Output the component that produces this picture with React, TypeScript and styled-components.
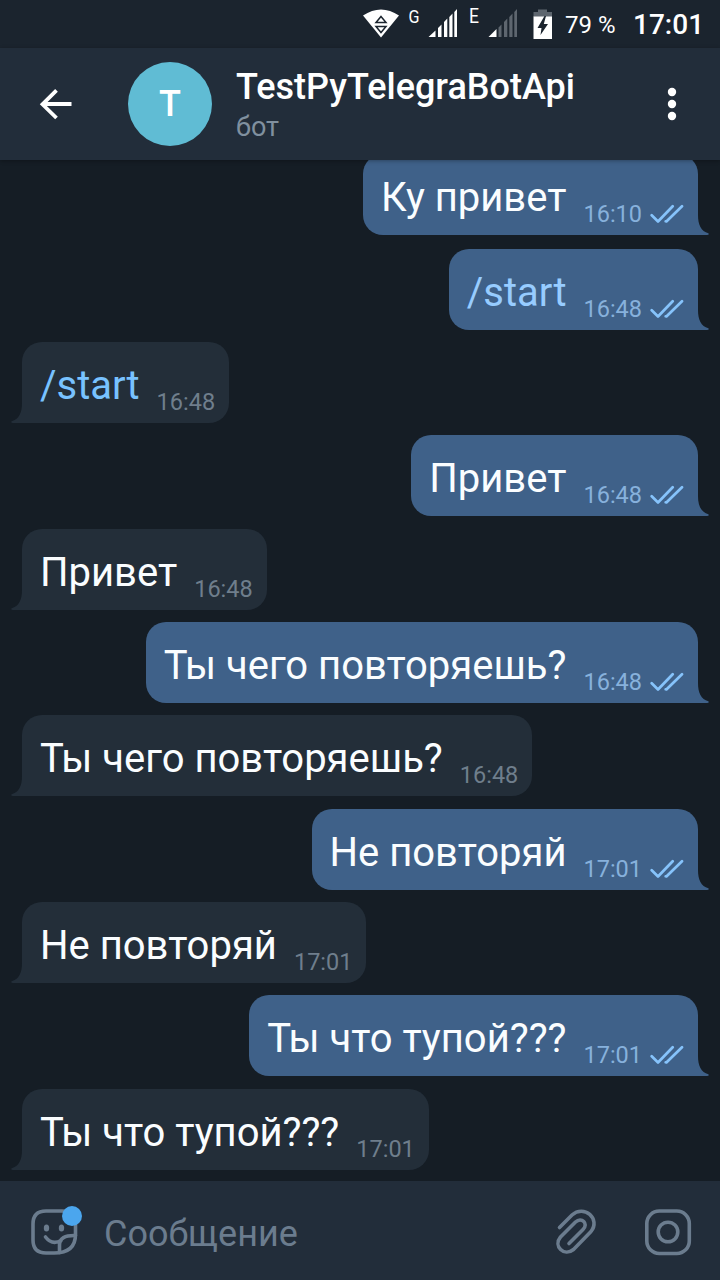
import React from "react";
import styled, { createGlobalStyle } from "styled-components";

const colors = {
  status: "#1b242e",
  panel: "#222d3a",
  chat: "#151d25",
  incoming: "#232e39",
  outgoing: "#3f6189",
  icon: "#6b7c8e",
};

const GlobalStyle = createGlobalStyle`
  * {
    box-sizing: border-box;
  }
  body {
    margin: 0;
    background-color: ${colors.chat};
    font-family: Roboto, "Noto Sans", sans-serif;
  }
`;

const Screen = styled.div`
  display: flex;
  flex-direction: column;
  width: 720px;
  height: 1280px;
  overflow: hidden;
  background-color: ${colors.chat};
`;

const StatusBar = styled.div`
  display: flex;
  flex: none;
  align-items: center;
  justify-content: flex-end;
  height: 48px;
  padding-right: 17px;
  color: #ffffff;
  background-color: ${colors.status};
`;

const StatusIcons = styled.svg`
  flex: none;
  width: 192px;
  height: 48px;
  margin-right: 12px;
`;

const Battery = styled.span`
  width: 50px;
  margin-right: 18px;
  padding-top: 2px;
  font-size: 24px;
  line-height: 48px;
  white-space: nowrap;
`;

const Clock = styled.span`
  width: 70px;
  padding-top: 2px;
  font-size: 28px;
  font-weight: 500;
  line-height: 48px;
  white-space: nowrap;
`;

const Header = styled.header`
  position: relative;
  z-index: 1;
  display: flex;
  flex: none;
  align-items: center;
  height: 112px;
  padding: 0 32px 0 36px;
  background-color: ${colors.panel};
  box-shadow: 0 1px 4px rgba(0, 0, 0, 0.3);
`;

const IconButton = styled.button`
  display: flex;
  flex: none;
  padding: 0;
  border: 0;
  background: none;
`;

const Avatar = styled.div`
  flex: none;
  width: 84px;
  height: 84px;
  margin: 0 24px 0 52px;
  border-radius: 50%;
  color: #ffffff;
  background-color: #60bcd4;
  font-size: 36px;
  font-weight: 500;
  line-height: 84px;
  text-align: center;
`;

const Title = styled.div`
  flex: 1;
  padding-top: 3px;
`;

const Name = styled.div`
  color: #ffffff;
  font-size: 36px;
  font-weight: 500;
  line-height: 42px;
  white-space: nowrap;
`;

const Subtitle = styled.div`
  color: #80909f;
  font-size: 27px;
  line-height: 38px;
`;

const Chat = styled.main`
  display: flex;
  flex: 1;
  flex-direction: column;
  align-items: flex-start;
  justify-content: flex-end;
  gap: 12.33px;
  min-height: 0;
  padding: 0 22px 11.3px;
  overflow: hidden;
`;

const Bubble = styled.div<{ $out?: boolean; $last?: boolean }>`
  position: relative;
  display: flex;
  flex: none;
  align-items: flex-end;
  align-self: ${({ $out }) => ($out ? "flex-end" : "flex-start")};
  height: 81px;
  margin-bottom: ${({ $last }) => ($last ? "1.4px" : "0")};
  padding: 0 14px 0 18px;
  border-radius: ${({ $out }) => ($out ? "20px 20px 0 20px" : "20px 20px 20px 0")};
  background-color: ${({ $out }) => ($out ? colors.outgoing : colors.incoming)};
`;

const Tail = styled.svg<{ $out?: boolean }>`
  position: absolute;
  bottom: 0;
  ${({ $out }) => ($out ? "left: calc(100% - 1px);" : "right: calc(100% - 1px); transform: scaleX(-1);")}
  width: 12px;
  height: 26px;
  fill: ${({ $out }) => ($out ? colors.outgoing : colors.incoming)};
`;

const MessageText = styled.span<{ $color: string }>`
  margin-right: 17px;
  padding-bottom: 13px;
  color: ${({ $color }) => $color};
  font-size: 40px;
  line-height: 48px;
  white-space: nowrap;
`;

const Time = styled.span<{ $out?: boolean }>`
  padding-bottom: 7px;
  color: ${({ $out }) => ($out ? "#87b1dc" : "#6f7e8c")};
  font-size: 23.5px;
  line-height: 28px;
  white-space: nowrap;
`;

const Ticks = styled.svg`
  width: 34px;
  height: 20px;
  margin: 0 0 11px 8px;
  fill: none;
  stroke: #86c3fb;
  stroke-width: 2.7;
  stroke-linecap: round;
  stroke-linejoin: round;
`;

const Composer = styled.footer`
  display: flex;
  flex: none;
  align-items: center;
  height: 99px;
  padding: 3px 28px 0 30px;
  background-color: ${colors.panel};
`;

const Placeholder = styled.div`
  flex: 1;
  padding: 3px 0 0 22px;
  color: ${colors.icon};
  font-size: 36px;
  line-height: 48px;
`;

const LineIcon = styled.svg`
  flex: none;
  fill: none;
  stroke: ${colors.icon};
  stroke-width: 3.6;
  stroke-linecap: round;
  stroke-linejoin: round;
`;

const Attach = styled(LineIcon)`
  margin-right: 40px;
`;

interface Message {
  text: string;
  time: string;
  out?: boolean;
}

const messages: Message[] = [
  { text: "Ку привет", time: "16:10", out: true },
  { text: "/start", time: "16:48", out: true },
  { text: "/start", time: "16:48" },
  { text: "Привет", time: "16:48", out: true },
  { text: "Привет", time: "16:48" },
  { text: "Ты чего повторяешь?", time: "16:48", out: true },
  { text: "Ты чего повторяешь?", time: "16:48" },
  { text: "Не повторяй", time: "17:01", out: true },
  { text: "Не повторяй", time: "17:01" },
  { text: "Ты что тупой???", time: "17:01", out: true },
  { text: "Ты что тупой???", time: "17:01" },
];

const textColor = ({ text, out }: Message) => {
  if (!text.startsWith("/")) return "#fafdff";
  return out ? "#97ccff" : "#78c2ff";
};

const MessageBubble: React.FC<{ message: Message; last?: boolean }> = ({ message, last }) => {
  const { text, time, out } = message;
  return (
    <Bubble $out={out} $last={last}>
      <MessageText $color={textColor(message)}>{text}</MessageText>
      <Time $out={out}>{time}</Time>
      {out && (
        <Ticks viewBox="0 0 34 20">
          <path d="M1.7 11.3 8 17.5 22.7 2.2M15.7 17.3 16.4 17.5 32 2.2" />
        </Ticks>
      )}
      <Tail $out={out} viewBox="0 0 12 26">
        <path d="M0 6H1C1 16 4 22 11.4 24.3Q12.5 26 10 26H0Z" />
      </Tail>
    </Bubble>
  );
};

const StatusGlyphs = () => (
  <StatusIcons viewBox="361 0 192 48" fill="#ffffff">
    <path d="M363 15.500Q381 3.500 399 15.500L381 37.500Z" />
    <path
      d="M381 16.500L386 22.500H376ZM376 26.500H386L381 32.500Z"
      fill="none"
      stroke={colors.status}
      strokeWidth="1.500"
    />
    <text x="408.500" y="22.800" fontSize="19" textLength="11" lengthAdjust="spacingAndGlyphs">
      G
    </text>
    <path d="M428.500 37L435.500 30.500V37ZM438 28L441.500 24.500V37H438ZM444 22L447.300 18.500V37H444ZM449.300 17L452.500 13.500V37H449.300ZM454.300 12L457 9V37H454.300Z" />
    <text x="469" y="23" fontSize="20" textLength="10" lengthAdjust="spacingAndGlyphs">
      E
    </text>
    <path d="M488.500 37L496.500 29V37Z" />
    <path
      d="M498.500 27.500L501.500 24.500V37H498.500ZM504 22L507.300 18.500V37H504ZM509.300 17L512.500 13.500V37H509.300ZM514.300 12L517 9V37H514.300Z"
      fill="#5e666f"
    />
    <path d="M533.500 17V12H538V9.500H547V12H552V17Z" fill="#5e666f" />
    <path d="M533.500 16.500H552V39H533.500Z" />
    <path d="M544.500 16L537.500 28H541.500L540.500 35L548 24H543.800L546 16Z" fill={colors.status} />
  </StatusIcons>
);

const App: React.FC = () => {
  return (
    <>
      <GlobalStyle />
      <Screen>
        <StatusBar>
          <StatusGlyphs />
          <Battery>79 %</Battery>
          <Clock>17:01</Clock>
        </StatusBar>
        <Header>
          <IconButton aria-label="Назад">
            <svg width="40" height="40" viewBox="0 0 40 40" fill="none" stroke="#ffffff" strokeWidth="3.8">
              <path d="M35.500 20H7M20.500 6.300 6.500 20.300 20.500 34" />
            </svg>
          </IconButton>
          <Avatar>T</Avatar>
          <Title>
            <Name>TestPyTelegraBotApi</Name>
            <Subtitle>бот</Subtitle>
          </Title>
          <IconButton aria-label="Меню">
            <svg width="32" height="40" viewBox="0 0 32 40" fill="#ffffff">
              <circle cx="16" cy="8" r="4.200" />
              <circle cx="16" cy="20" r="4.200" />
              <circle cx="16" cy="32" r="4.200" />
            </svg>
          </IconButton>
        </Header>
        <Chat>
          {messages.map((message, i) => (
            <MessageBubble key={i} message={message} last={i === 0} />
          ))}
        </Chat>
        <Composer>
          <LineIcon width="52" height="52" viewBox="30 1206 52 52">
            <path d="M75.500 1234.500V1224Q75.500 1211 62 1211H46Q33 1211 33 1224V1240Q33 1253 46 1253H54Q75.500 1253 75.500 1234.500Z" />
            <path d="M75.500 1235.500Q59.500 1235 59.500 1245V1252.500M45.500 1237Q52 1245.500 61 1240.500" />
            <ellipse cx="46.500" cy="1228" rx="2.700" ry="3.500" fill={colors.icon} stroke="none" />
            <ellipse cx="61.500" cy="1228" rx="2.700" ry="3.500" fill={colors.icon} stroke="none" />
            <circle cx="72" cy="1216" r="10" fill="#4ba6ee" stroke="none" />
          </LineIcon>
          <Placeholder>Сообщение</Placeholder>
          <Attach width="48" height="52" viewBox="552 1206 48 52">
            <path d="M559.500 1227.500 572 1215C584 1204 601 1219 591 1231.500L573.500 1249.500C564 1257 553 1246 560.500 1237L575.500 1222C581.500 1216.500 589 1223.500 583 1229.500L569 1243.500" />
          </Attach>
          <LineIcon width="52" height="52" viewBox="640 1206 52 52">
            <rect x="646.800" y="1211" width="42.500" height="42.500" rx="12.500" />
            <circle cx="668" cy="1232" r="9.800" />
          </LineIcon>
        </Composer>
      </Screen>
    </>
  );
};

export default App;
